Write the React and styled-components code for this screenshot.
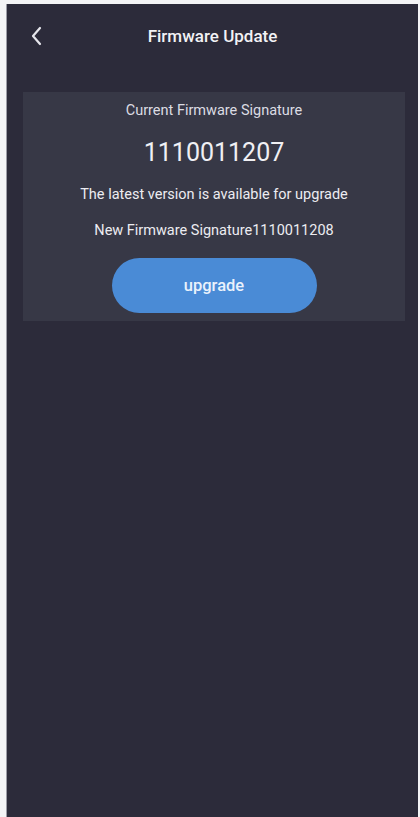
import React from 'react'
import styled, { createGlobalStyle } from 'styled-components'

const GlobalStyle = createGlobalStyle`
  html, body {
    margin: 0;
    padding: 0;
    background: #f4f4f6;
  }
  body {
    font-family: Roboto, "Noto Sans", "Liberation Sans", sans-serif;
  }
`

const Frame = styled.div`
  box-sizing: border-box;
  height: 817px;
  padding: 4px 2px 0 6px;
`

const Screen = styled.div`
  height: 100%;
  background: #2c2b3a;
  display: flex;
  flex-direction: column;
  border-left: 1px solid #9c9ca6;
`

const Header = styled.div`
  position: relative;
  height: 64px;
  display: flex;
  align-items: center;
  justify-content: center;
  color: #f2f2f5;
  font-size: 17px;
  font-weight: 500;
  margin-bottom: 24px;
`

const BackBtn = styled.button`
  position: absolute;
  left: 22px;
  top: 22px;
  border: none;
  background: none;
  padding: 0;
  cursor: pointer;
  display: flex;
`

const Card = styled.div`
  margin: 0 13px 0 16px;
  background: #373846;
  padding: 10px 0 8px;
  display: flex;
  flex-direction: column;
  align-items: center;
  color: #e8e8ee;
`

const Label = styled.div`
  font-size: 14.5px;
  line-height: 18px;
  color: #dcdce3;
`

const Signature = styled.div`
  font-size: 25px;
  line-height: 30px;
  font-weight: 400;
  color: #f0f0f4;
  margin-top: 18px;
`

const Info = styled.div`
  font-size: 14.5px;
  line-height: 18px;
  color: #ececf1;
  margin-top: ${p => p.gap}px;
`

const UpgradeBtn = styled.button`
  margin-top: 18px;
  width: 205px;
  height: 55px;
  border: none;
  border-radius: 28px;
  background: #4a8bd6;
  color: #eaf2fc;
  font-family: inherit;
  font-size: 16.5px;
  font-weight: 500;
  cursor: pointer;
`

const App = () => {
  return (
    <>
      <GlobalStyle />
      <Frame>
        <Screen>
          <Header>
            <BackBtn>
              <svg width="16" height="20" viewBox="0 0 16 20" fill="none">
                <path d="M11 2 L4 10 L11 18" stroke="#e6e6ec" strokeWidth="2.2" strokeLinecap="round" strokeLinejoin="round" />
              </svg>
            </BackBtn>
            Firmware Update
          </Header>
          <Card>
            <Label>Current Firmware Signature</Label>
            <Signature>1110011207</Signature>
            <Info gap={18}>The latest version is available for upgrade</Info>
            <Info gap={18}>New Firmware Signature1110011208</Info>
            <UpgradeBtn>upgrade</UpgradeBtn>
          </Card>
        </Screen>
      </Frame>
    </>
  )
}

export default App
